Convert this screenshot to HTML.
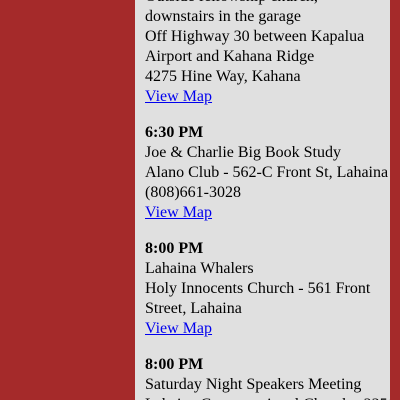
<!DOCTYPE html>
<html><head><style>
html,body{margin:0;padding:0;background:#a52a2a;width:400px;height:400px;overflow:hidden;}
.col{position:absolute;left:135px;top:-13px;width:245px;padding:0 0 0 10px;background:#e0e0e0;height:413px;overflow:hidden;font-family:"Liberation Serif",serif;font-size:16px;line-height:20px;color:#000;}
p{margin:0 0 16px 0;}
a{color:#00e;text-decoration:underline;}
</style></head><body>
<div class="col">
<p>Outside fellowship church,<br>downstairs in the garage<br>Off Highway 30 between Kapalua Airport and Kahana Ridge<br>4275 Hine Way, Kahana<br><a>View Map</a></p>
<p><b>6:30 PM</b><br>Joe &amp; Charlie Big Book Study<br>Alano Club - 562-C Front St, Lahaina<br>(808)661-3028<br><a>View Map</a></p>
<p><b>8:00 PM</b><br>Lahaina Whalers<br>Holy Innocents Church - 561 Front Street, Lahaina<br><a>View Map</a></p>
<p><b>8:00 PM</b><br>Saturday Night Speakers Meeting<br><span style="white-space:nowrap">Lahaina Congregational Church - 2351</span></p>
</div>
</body></html>
